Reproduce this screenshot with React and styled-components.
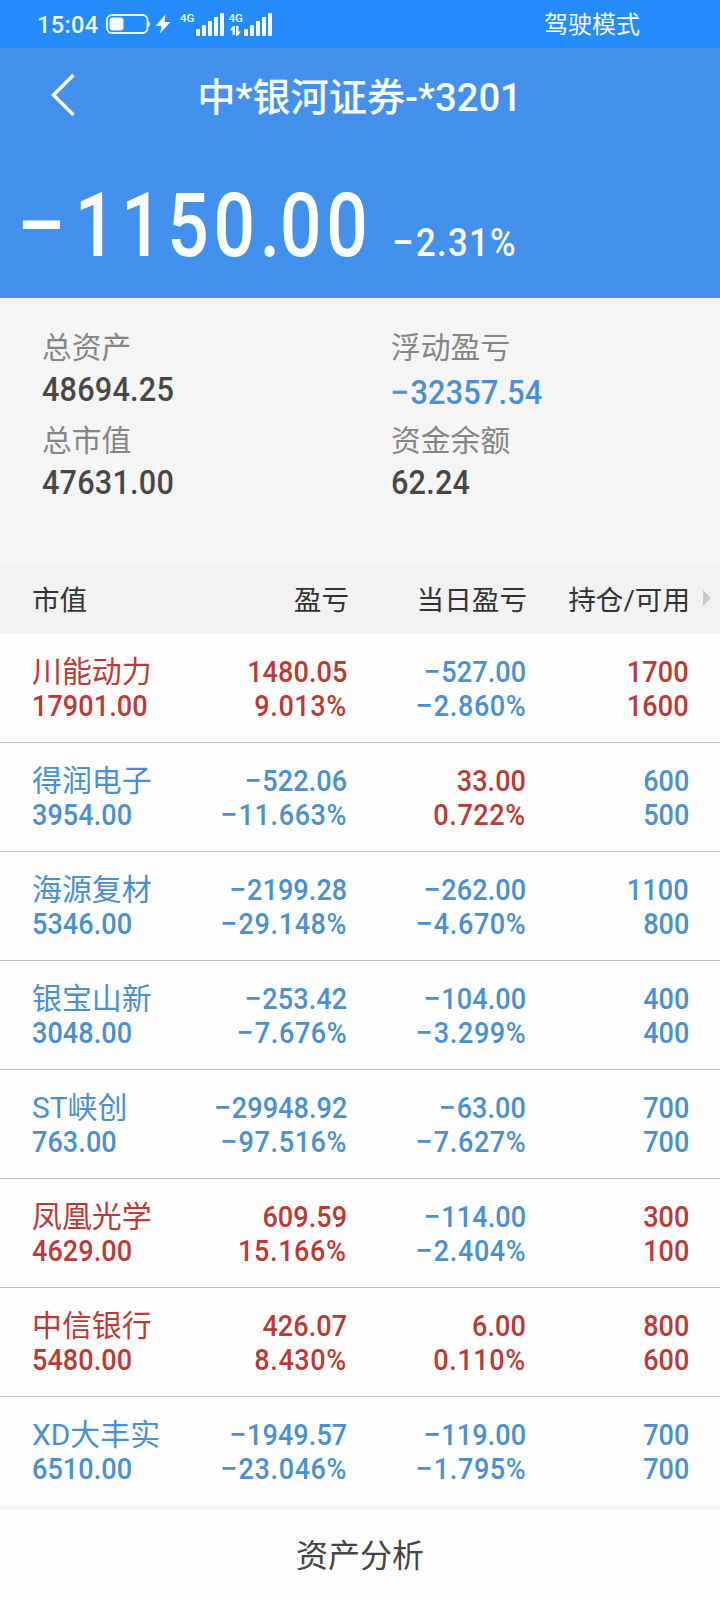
import React from "react";
import styled, { createGlobalStyle } from "styled-components";

const UP = "#bb3a36";
const DOWN = "#4a8fcf";

const GlobalStyle = createGlobalStyle`
	* {
		box-sizing: border-box;
	}
	body {
		margin: 0;
		background: #fefefe;
		font-family: Roboto, "Noto Sans CJK SC", sans-serif;
	}
`;

const Page = styled.div`
	width: 720px;
	height: 1600px;
	overflow: hidden;
	display: flex;
	flex-direction: column;
	background: #fefefe;
`;

const StatusBar = styled.div`
	flex: none;
	height: 48px;
	padding: 0 80px 0 37px;
	display: flex;
	align-items: center;
	justify-content: space-between;
	background: #258bfb;
	color: #f3fcff;
`;

const StatusIcons = styled.div`
	display: flex;
	align-items: center;
`;

const Clock = styled.span`
	width: 69px;
	font-size: 23.5px;
	font-weight: 500;
	line-height: 48px;
	letter-spacing: 0.4px;
	padding-top: 1px;
`;

const Mode = styled.span`
	font-size: 24px;
	line-height: 48px;
	padding-top: 1px;
`;

const Header = styled.header`
	flex: none;
	height: 250px;
	background: #4491ed;
	color: #fbfeff;
`;

const NavBar = styled.div`
	height: 98px;
	display: grid;
	grid-template-columns: 120px 1fr 121px;
	align-items: center;
`;

const BackButton = styled.button`
	border: 0;
	padding: 0 0 5px 49px;
	background: none;
	color: inherit;
	display: flex;
`;

const Title = styled.h1`
	margin: 0;
	padding-top: 2px;
	font-size: 38.2px;
	font-weight: 500;
	line-height: 96px;
	text-align: center;
	white-space: nowrap;
`;

const Today = styled.div`
	display: flex;
	align-items: baseline;
	padding-left: 21px;
	height: 152px;
	line-height: 160px;
`;

// narrow figures: glyphs are squeezed and then spaced out again
const Figure = styled.span`
	display: inline-block;
	font-weight: 500;
	white-space: nowrap;
	letter-spacing: ${(p) => p.$track}px;
	transform: scaleX(${(p) => p.$squeeze});
	transform-origin: ${(p) => p.$from || "left"} center;
`;

const Minus = styled.span`
	display: inline-block;
	margin-right: 0.065em;
	transform: scaleX(1.13);
`;

const TodayValue = styled(Figure)`
	width: 372px;
	font-size: 89px;

	${Minus} {
		margin-right: 0.11em;
		transform: scaleX(1.22);
	}
`;

const Dot = styled.span`
	letter-spacing: 0;
`;

const TodayPercent = styled(Figure)`
	font-size: 39.5px;
`;

const Summary = styled.section`
	flex: none;
	height: 264px;
	padding: 29px 0 0 42px;
	display: grid;
	grid-template-columns: 349px 1fr;
	grid-auto-rows: 93px;
	background: #f5f5f5;
`;

const SummaryLabel = styled.div`
	font-size: 29.8px;
	line-height: 42px;
	color: #858585;
`;

const SummaryValue = styled.div`
	font-size: 34px;
	line-height: 40px;
	padding-top: ${(p) => (p.$down ? 3 : 0)}px;
	color: ${(p) => (p.$down ? DOWN : "#474747")};
`;

const TableHead = styled.div`
	flex: none;
	height: 72px;
	display: grid;
	grid-template-columns: 32px 163px 154px 178px 163px 1fr;
	align-items: center;
	background: #f2f2f2;
	font-size: 27.6px;
	color: #333;
`;

const HeadCell = styled.div`
	grid-column-start: ${(p) => p.$col};
	padding-top: 5px;
	line-height: 67px;
	text-align: ${(p) => (p.$col === 2 ? "left" : "right")};
	white-space: nowrap;
`;

const Row = styled.div`
	flex: none;
	height: ${(p) => (p.$last ? 108 : 109)}px;
	padding-top: 21px;
	display: grid;
	grid-template-columns: 32px 161px 154px 179px 163px;
	border-bottom: ${(p) => (p.$last ? 0 : "1px solid #c2c2c2")};
`;

const Cell = styled.div`
	grid-column-start: ${(p) => p.$col};
	text-align: ${(p) => (p.$col === 2 ? "left" : "right")};
	color: ${(p) => (p.$up ? UP : DOWN)};
	font-size: 30px;
	line-height: 34px;
	white-space: nowrap;
`;

const Name = styled.div`
	height: 34px;
	font-size: 29.9px;
`;

const Line = styled.div`
	height: 34px;
`;

const Footer = styled.button`
	flex: none;
	height: 95px;
	border: 0;
	border-top: 5px solid #f5f5f5;
	background: #fefefe;
	font-family: inherit;
	font-size: 32px;
	line-height: 88px;
	padding: 2px 0 0;
	color: #444;
`;

const holdings = [
	["川能动力", "17901.00", "1480.05", "9.013%", "−527.00", "−2.860%", "1700", "1600"],
	["得润电子", "3954.00", "−522.06", "−11.663%", "33.00", "0.722%", "600", "500"],
	["海源复材", "5346.00", "−2199.28", "−29.148%", "−262.00", "−4.670%", "1100", "800"],
	["银宝山新", "3048.00", "−253.42", "−7.676%", "−104.00", "−3.299%", "400", "400"],
	["ST峡创", "763.00", "−29948.92", "−97.516%", "−63.00", "−7.627%", "700", "700"],
	["凤凰光学", "4629.00", "609.59", "15.166%", "−114.00", "−2.404%", "300", "100"],
	["中信银行", "5480.00", "426.07", "8.430%", "6.00", "0.110%", "800", "600"],
	["XD大丰实", "6510.00", "−1949.57", "−23.046%", "−119.00", "−1.795%", "700", "700"],
];

const isUp = (value) => !value.startsWith("−");

const Signed = ({ value }) =>
	isUp(value) ? (
		value
	) : (
		<>
			<Minus>−</Minus>
			{value.slice(1)}
		</>
	);

const Signal = ({ x }) => (
	<g>
		<rect x={x} y="29" width="4" height="7" rx="1" />
		<rect x={x + 6} y="25" width="4" height="11" rx="1" />
		<rect x={x + 12} y="21" width="4" height="15" rx="1" />
		<rect x={x + 18} y="17" width="4" height="19" rx="1" />
		<rect x={x + 24} y="13" width="4" height="23" rx="1" />
	</g>
);

const StatusGlyphs = () => (
	<svg width="168" height="48" viewBox="106 0 168 48" fill="currentColor">
		<rect x="107" y="15" width="40.5" height="18" rx="5" fill="none" stroke="currentColor" strokeWidth="1.8" />
		<rect x="109.5" y="17.5" width="14" height="13" rx="3" />
		<path d="M148 21.5q2 0 2 2.5t-2 2.5z" />
		<path d="M165.5 14.5L155.500 26h6l-1.500 7.500L170.500 22h-6z" />
		<text x="180" y="21.500" fontSize="11.500" fontWeight="500">4G</text>
		<Signal x={196} />
		<text x="228.500" y="21.500" fontSize="11.500" fontWeight="500">4G</text>
		<path d="M229.500 30.500l3.500-4.500h2V35h-2.500v-5zM236 26h2.500v5.500h2.500L237.500 36H236z" />
		<Signal x={244} />
	</svg>
);

const Amount = ({ value, from }) => (
	<Line>
		<Figure $track={value.endsWith("%") ? 0.7 : 0.1} $squeeze={0.9} $from={from}>
			<Signed value={value} />
		</Figure>
	</Line>
);

const Holding = ({ item, last }) => {
	const [name, value, profit, rate, dayProfit, dayRate, held, usable] = item;
	const up = isUp(profit);
	return (
		<Row $last={last}>
			<Cell $col={2} $up={up}>
				<Name>{name}</Name>
				<Amount value={value} from="left" />
			</Cell>
			<Cell $col={3} $up={up}>
				<Amount value={profit} from="right" />
				<Amount value={rate} from="right" />
			</Cell>
			<Cell $col={4} $up={isUp(dayProfit)}>
				<Amount value={dayProfit} from="right" />
				<Amount value={dayRate} from="right" />
			</Cell>
			<Cell $col={5} $up={up}>
				<Amount value={held} from="right" />
				<Amount value={usable} from="right" />
			</Cell>
		</Row>
	);
};

const SummaryItem = ({ label, value }) => (
	<div>
		<SummaryLabel>{label}</SummaryLabel>
		<SummaryValue $down={!isUp(value)}>
			<Figure $track={0.25} $squeeze={0.9}>
				<Signed value={value} />
			</Figure>
		</SummaryValue>
	</div>
);

const App = () => {
	return (
		<Page>
			<GlobalStyle />
			<StatusBar>
				<StatusIcons>
					<Clock>15:04</Clock>
					<StatusGlyphs />
				</StatusIcons>
				<Mode>驾驶模式</Mode>
			</StatusBar>
			<Header>
				<NavBar>
					<BackButton>
						<svg width="28" height="44" viewBox="0 0 28 44" fill="none" stroke="currentColor" strokeWidth="3.500">
							<path d="M24.500 2L4.500 22l20 20" />
						</svg>
					</BackButton>
					<Title>中*银河证券-*3201</Title>
				</NavBar>
				<Today>
					<TodayValue $track={5.8} $squeeze={0.82}>
						<Minus>−</Minus>1150<Dot>.</Dot>00
					</TodayValue>
					<TodayPercent $track={1.4} $squeeze={0.88}>
						<Signed value="−2.31%" />
					</TodayPercent>
				</Today>
			</Header>
			<Summary>
				<SummaryItem label="总资产" value="48694.25" />
				<SummaryItem label="浮动盈亏" value="−32357.54" />
				<SummaryItem label="总市值" value="47631.00" />
				<SummaryItem label="资金余额" value="62.24" />
			</Summary>
			<TableHead>
				<HeadCell $col={2}>市值</HeadCell>
				<HeadCell $col={3}>盈亏</HeadCell>
				<HeadCell $col={4}>当日盈亏</HeadCell>
				<HeadCell $col={5}>持仓/可用</HeadCell>
				<svg width="24" height="18" viewBox="0 0 24 18" fill="#c9c9c9">
					<path d="M13 1l8 8-8 8z" />
				</svg>
			</TableHead>
			{holdings.map((item, i) => (
				<Holding key={item[0]} item={item} last={i === holdings.length - 1} />
			))}
			<Footer>资产分析</Footer>
		</Page>
	);
};

export default App;
